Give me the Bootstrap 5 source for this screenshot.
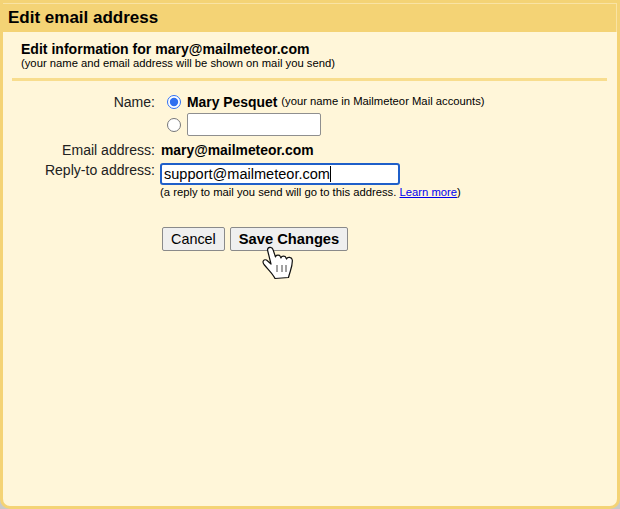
<!DOCTYPE html>
<html lang="en">
<head>
<meta charset="utf-8">
<title>Edit email address</title>
<link href="https://cdn.jsdelivr.net/npm/bootstrap@5.3.0/dist/css/bootstrap.min.css" rel="stylesheet">
<style>
html,body{height:100%;margin:0;background:#c9c9c9;}
body{font-family:"Liberation Sans",Arial,sans-serif;color:#000;font-size:14px;line-height:1;}
.dlg{height:509px;width:620px;background:#fff6d9;border:3px solid #f4d375;border-radius:0 0 10px 10px;position:relative;overflow:hidden;}
.dlg-head{height:29px;background:#f4d375;border-top:1px solid #f9e3a3;border-right:1px solid #f9e3a3;padding-left:5px;font-size:17px;font-weight:700;line-height:27px;}
.intro{padding:9px 0 0 18px;}
.intro-t{font-size:14.05px;font-weight:700;line-height:16px;}
.intro-s{font-size:11.25px;line-height:12px;}
.rule{height:3px;margin:9px 10px 0 9px;background:#f8dd8e;}
.form-area{padding-top:13px;}
.lbl{width:152px;text-align:right;flex:none;font-size:14.05px;line-height:16px;color:#222;}
.lbl-up{margin-top:-1px;}
.val{margin-left:6px;}
.rad{width:14px;height:14px;margin:0 6px 0 6px;accent-color:#2f6fef;flex:none;}
.nm{font-size:13.9px;font-weight:700;line-height:16px;}
.hint{font-size:11.25px;}
.row-2{margin-top:3px;}
.row-3{margin-top:6px;}
.row-4{margin-top:5px;}
.tinput{width:134px;height:23px;border:1px solid #8f8f8f;border-radius:2px;background:#fff;flex:none;}
.rinput{width:240px;height:22px;margin-left:5px;border:2px solid #1f5fc9;border-radius:3px;background:#fff;font-size:14.55px;line-height:18px;padding:0 2px;white-space:nowrap;}
.caret-bar{display:inline-block;width:1px;height:16px;background:#000;vertical-align:-3px;}
.small-note{font-size:11.25px;line-height:12px;margin:1px 0 0 157px;}
.small-note a{color:#0000ee;}
.btns{margin:29px 0 0 159px;gap:5px;}
.gbtn{height:24px;border:1px solid #8a8a8a;border-radius:2px;background:#efefef;font-size:14.4px;color:#000;padding:0 8px;line-height:22px;}
.gbtn-b{font-weight:700;font-size:14.7px;}
.cursor{position:absolute;left:262px;top:246px;width:32px;height:34px;}
</style>
</head>
<body>
<div class="dlg">
  <div class="dlg-head">Edit email address</div>
  <div class="intro">
    <div class="intro-t">Edit information for mary@mailmeteor.com</div>
    <div class="intro-s">(your name and email address will be shown on mail you send)</div>
  </div>
  <div class="rule"></div>
  <div class="form-area">
    <div class="d-flex align-items-center">
      <div class="lbl">Name:</div>
      <div class="d-flex align-items-center val"><input class="rad" type="radio" name="n" checked><span class="nm">Mary Pesquet</span><span class="hint ms-1">(your name in Mailmeteor Mail accounts)</span></div>
    </div>
    <div class="d-flex align-items-center row-2">
      <div class="lbl"></div>
      <div class="d-flex align-items-center val"><input class="rad" type="radio" name="n"><div class="tinput"></div></div>
    </div>
    <div class="d-flex row-3">
      <div class="lbl">Email address:</div>
      <div class="val nm">mary@mailmeteor.com</div>
    </div>
    <div class="d-flex row-4">
      <div class="lbl lbl-up">Reply-to address:</div>
      <div class="rinput">support@mailmeteor.com<span class="caret-bar"></span></div>
    </div>
    <div class="small-note">(a reply to mail you send will go to this address. <a href="#">Learn more</a>)</div>
    <div class="d-flex btns">
      <button class="gbtn" type="button">Cancel</button>
      <button class="gbtn gbtn-b" type="button">Save Changes</button>
    </div>
  </div>
</div>
<svg class="cursor" viewBox="0 0 32 34" aria-hidden="true">
  <path d="M5.500 4C5.500 .8 10 .2 11 3.500L13.500 11C14 8.500 18 8.500 18.500 11L19 12C19.500 9.500 23.500 9.500 24 12L24.500 13C25.500 10.500 30 11 30.300 14C30.800 20 28 25 26.500 31.500L13 32.500C11 28 7 24.500 2 18.500C-.2 15.500 1.800 13 4.500 14L9 18Z" fill="#fff" stroke="#111" stroke-width="1.200" stroke-linejoin="round"/>
  <path d="M15 19v7M20 19v7M24 19v7" stroke="#444" stroke-width="1" fill="none"/>
</svg>
</body>
</html>
